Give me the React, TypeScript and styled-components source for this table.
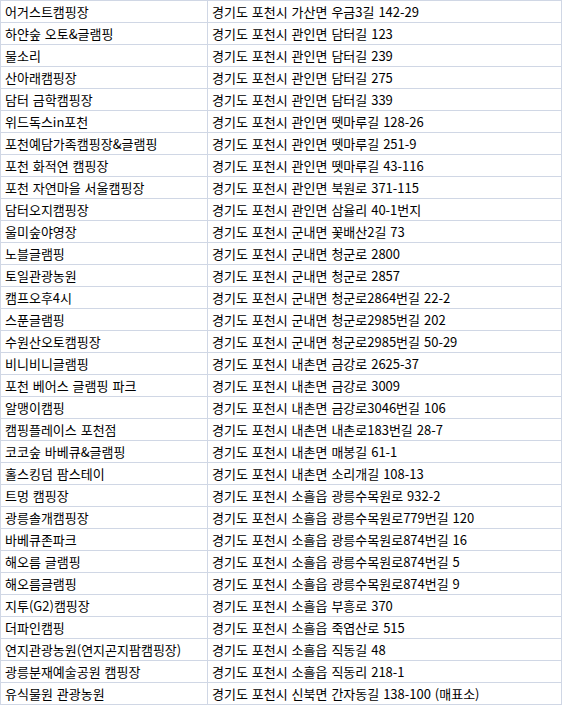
import styled, { createGlobalStyle } from "styled-components";

const Global = createGlobalStyle`
    html, body {
        margin: 0;
        padding: 0;
        background: #fff;
    }
`;

const Sheet = styled.table`
    border-collapse: collapse;
    table-layout: fixed;
    width: 562px;
    font-family: "Noto Sans CJK KR", "Noto Sans", sans-serif;
    font-size: 13px;
    color: #000;
`;

const Cell = styled.td<{ $w?: number }>`
    width: ${(p) => (p.$w ? `${p.$w}px` : "auto")};
    height: 21px;
    padding: 0 0 0 4px;
    border: 1px solid #d0d7e5;
    white-space: nowrap;
    overflow: hidden;
    vertical-align: middle;
    line-height: 21px;
    word-spacing: 1px;
`;

const rows: [string, string][] = [
    ["어거스트캠핑장", "경기도 포천시 가산면 우금3길 142-29"],
    ["하얀숲 오토&글램핑", "경기도 포천시 관인면 담터길 123"],
    ["물소리", "경기도 포천시 관인면 담터길 239"],
    ["산아래캠핑장", "경기도 포천시 관인면 담터길 275"],
    ["담터 금학캠핑장", "경기도 포천시 관인면 담터길 339"],
    ["위드독스in포천", "경기도 포천시 관인면 뗏마루길 128-26"],
    ["포천예담가족캠핑장&글램핑", "경기도 포천시 관인면 뗏마루길 251-9"],
    ["포천 화적연 캠핑장", "경기도 포천시 관인면 뗏마루길 43-116"],
    ["포천 자연마을 서울캠핑장", "경기도 포천시 관인면 북원로 371-115"],
    ["담터오지캠핑장", "경기도 포천시 관인면 삼율리 40-1번지"],
    ["울미숲야영장", "경기도 포천시 군내면 꽃배산2길 73"],
    ["노블글램핑", "경기도 포천시 군내면 청군로 2800"],
    ["토일관광농원", "경기도 포천시 군내면 청군로 2857"],
    ["캠프오후4시", "경기도 포천시 군내면 청군로2864번길 22-2"],
    ["스푼글램핑", "경기도 포천시 군내면 청군로2985번길 202"],
    ["수원산오토캠핑장", "경기도 포천시 군내면 청군로2985번길 50-29"],
    ["비니비니글램핑", "경기도 포천시 내촌면 금강로 2625-37"],
    ["포천 베어스 글램핑 파크", "경기도 포천시 내촌면 금강로 3009"],
    ["알맹이캠핑", "경기도 포천시 내촌면 금강로3046번길 106"],
    ["캠핑플레이스 포천점", "경기도 포천시 내촌면 내촌로183번길 28-7"],
    ["코코숲 바베큐&글램핑", "경기도 포천시 내촌면 매봉길 61-1"],
    ["홀스킹덤 팜스테이", "경기도 포천시 내촌면 소리개길 108-13"],
    ["트멍 캠핑장", "경기도 포천시 소흘읍 광릉수목원로 932-2"],
    ["광릉솔개캠핑장", "경기도 포천시 소흘읍 광릉수목원로779번길 120"],
    ["바베큐존파크", "경기도 포천시 소흘읍 광릉수목원로874번길 16"],
    ["해오름 글램핑", "경기도 포천시 소흘읍 광릉수목원로874번길 5"],
    ["해오름글램핑", "경기도 포천시 소흘읍 광릉수목원로874번길 9"],
    ["지투(G2)캠핑장", "경기도 포천시 소흘읍 부흥로 370"],
    ["더파인캠핑", "경기도 포천시 소흘읍 죽엽산로 515"],
    ["연지관광농원(연지곤지팜캠핑장)", "경기도 포천시 소흘읍 직동길 48"],
    ["광릉분재예술공원 캠핑장", "경기도 포천시 소흘읍 직동리 218-1"],
    ["유식물원 관광농원", "경기도 포천시 신북면 간자동길 138-100 (매표소)"],
];

const App = () => {
    return (
        <>
            <Global />
            <Sheet>
                <tbody>
                    {rows.map(([name, addr], i) => (
                        <tr key={i}>
                            <Cell $w={202}>{name}</Cell>
                            <Cell>{addr}</Cell>
                        </tr>
                    ))}
                </tbody>
            </Sheet>
        </>
    );
};

export default App;
